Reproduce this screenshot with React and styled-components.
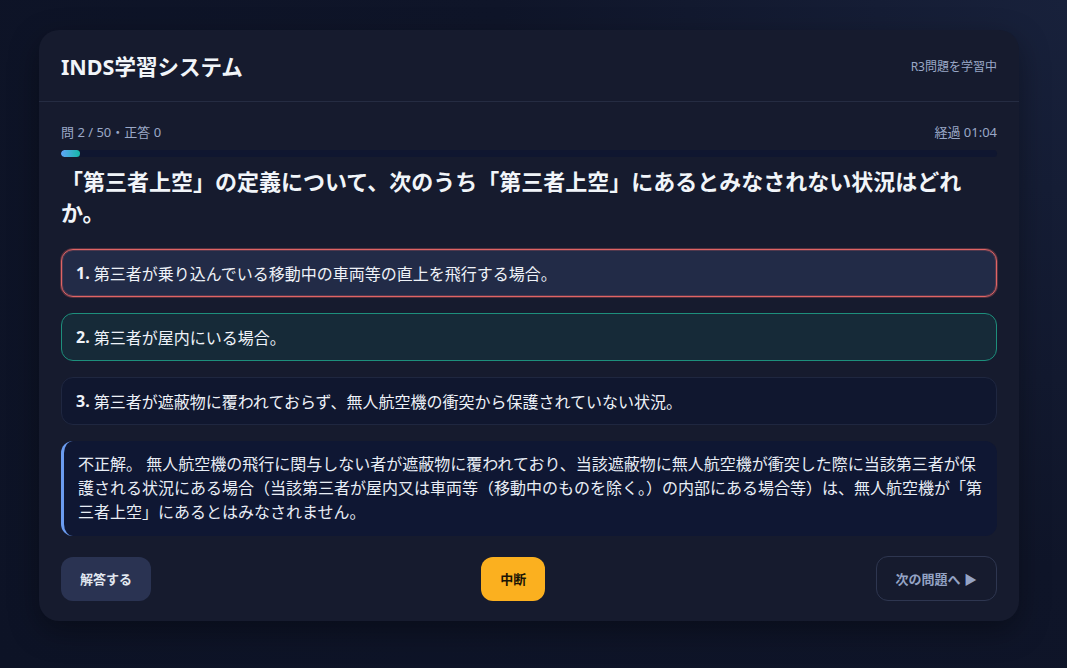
import React from "react";
import styled, { createGlobalStyle, css } from "styled-components";

const Global = createGlobalStyle`
  html, body {
    margin: 0;
    padding: 0;
    height: 100%;
  }
  body {
    background: radial-gradient(circle at 100% 0%, #18213b 0%, #0f1529 45%, #0d1326 100%);
    font-family: "Noto Sans", "Noto Sans CJK JP", sans-serif;
    color: #e2e8f0;
  }
`;

const Page = styled.div`
  min-height: 668px;
  box-sizing: border-box;
  padding: 30px 48px 0 39px;
`;

const Card = styled.div`
  width: 980px;
  background: #161b2e;
  border-radius: 20px;
  box-shadow: 0 10px 30px rgba(0, 0, 0, 0.35);
  overflow: hidden;
`;

const Header = styled.div`
  height: 72px;
  box-sizing: border-box;
  padding: 0 22px;
  display: flex;
  align-items: center;
  justify-content: space-between;
  border-bottom: 1px solid #252c42;
`;

const Title = styled.h1`
  margin: 0;
  font-size: 21.5px;
  font-weight: 700;
  color: #f1f5f9;
`;

const Status = styled.span`
  font-size: 12px;
  color: #9aa8c7;
`;

const Body = styled.div`
  padding: 22px 22px 20px;
`;

const Meta = styled.div`
  display: flex;
  justify-content: space-between;
  font-size: 13px;
  line-height: 17px;
  color: #9aa8c7;
`;

const Track = styled.div`
  margin-top: 9px;
  height: 7px;
  border-radius: 4px;
  background: #0f1630;
  overflow: hidden;
`;

const Fill = styled.div`
  height: 100%;
  border-radius: 4px;
  background: linear-gradient(90deg, #60a5fa, #14b8a6);
`;

const Question = styled.h2`
  margin: 9px 0 22px;
  font-size: 22px;
  font-weight: 700;
  line-height: 30.5px;
  color: #f1f5f9;
`;

const Options = styled.div`
  display: flex;
  flex-direction: column;
  gap: 16px;
`;

const variants = {
  wrong: css`
    background: #222b47;
    border-color: #e06464;
    box-shadow: 0 0 0 1px rgba(224, 100, 100, 0.3), inset 0 0 0 1px rgba(224, 100, 100, 0.25);
  `,
  correct: css`
    background: #162a38;
    border-color: #1d8f7c;
  `,
  plain: css`
    background: #10172f;
    border-color: #1f2740;
  `,
};

const Option = styled.div`
  height: 48px;
  box-sizing: border-box;
  border: 1px solid;
  border-radius: 12px;
  padding: 0 14px;
  display: flex;
  align-items: center;
  font-size: 16px;
  color: #eef2f8;
  ${(p) => variants[p.$state]}
`;

const Num = styled.b`
  font-weight: 700;
  margin-right: 4px;
`;

const Explain = styled.div`
  margin-top: 16px;
  background: #0f1733;
  border-left: 3px solid #6b9cf0;
  border-radius: 12px;
  padding: 11px 8px 12px 14px;
  font-size: 16px;
  line-height: 24px;
  color: #e8edf5;
`;

const Actions = styled.div`
  margin-top: 20px;
  display: flex;
  justify-content: space-between;
  align-items: center;
`;

const Button = styled.button`
  height: 44px;
  border-radius: 12px;
  padding: 0 18px;
  font-family: inherit;
  font-size: 13px;
  font-weight: 700;
  cursor: pointer;
  border: 1px solid transparent;
  ${(p) =>
    p.$kind === "primary" &&
    css`
      background: #2a3352;
      color: #e2e8f0;
    `}
  ${(p) =>
    p.$kind === "warn" &&
    css`
      background: #fbb01f;
      color: #1a1405;
    `}
  ${(p) =>
    p.$kind === "ghost" &&
    css`
      height: 45px;
      padding: 0 19px;
      background: transparent;
      border-color: #2e3650;
      color: #94a3c4;
    `}
`;

const options = [
  { n: 1, text: "第三者が乗り込んでいる移動中の車両等の直上を飛行する場合。", state: "wrong" },
  { n: 2, text: "第三者が屋内にいる場合。", state: "correct" },
  { n: 3, text: "第三者が遮蔽物に覆われておらず、無人航空機の衝突から保護されていない状況。", state: "plain" },
];

export default function App() {
  return (
    <Page>
      <Global />
      <Card>
        <Header>
          <Title>INDS学習システム</Title>
          <Status>R3問題を学習中</Status>
        </Header>
        <Body>
          <Meta>
            <span>問 2 / 50・正答 0</span>
            <span>経過 01:04</span>
          </Meta>
          <Track>
            <Fill style={{ width: "2%" }} />
          </Track>
          <Question>
            「第三者上空」の定義について、次のうち「第三者上空」にあるとみなされない状況はどれか。
          </Question>
          <Options>
            {options.map((o) => (
              <Option key={o.n} $state={o.state}>
                <Num>{o.n}.</Num>
                {o.text}
              </Option>
            ))}
          </Options>
          <Explain>
            不正解。 無人航空機の飛行に関与しない者が遮蔽物に覆われており、当該遮蔽物に無人航空機が衝突した際に当該第三者が保護される状況にある場合（当該第三者が屋内又は車両等（移動中のものを除く。）の内部にある場合等）は、無人航空機が「第三者上空」にあるとはみなされません。
          </Explain>
          <Actions>
            <Button $kind="primary">解答する</Button>
            <Button $kind="warn">中断</Button>
            <Button $kind="ghost">次の問題へ ▶</Button>
          </Actions>
        </Body>
      </Card>
    </Page>
  );
}
